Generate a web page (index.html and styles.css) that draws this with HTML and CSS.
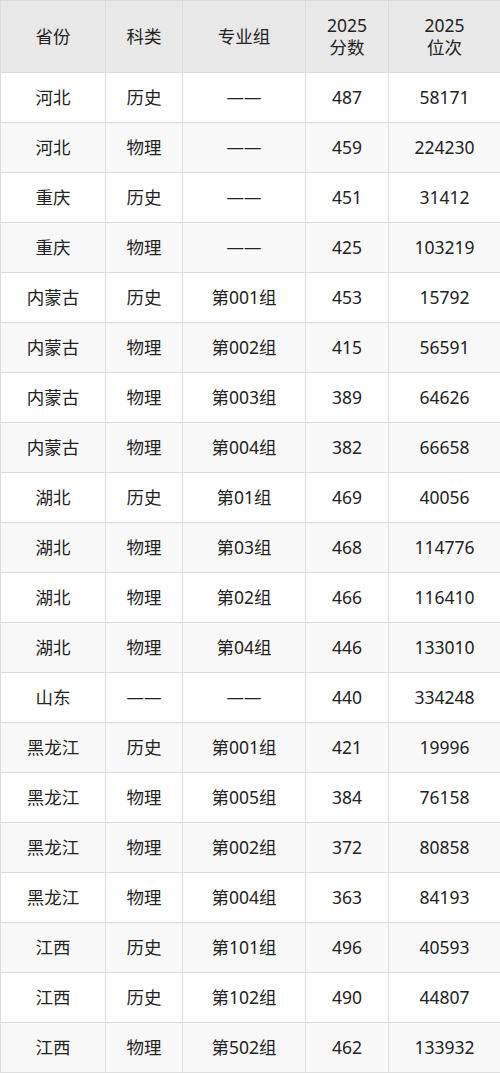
FILE: index.html
```html
<!DOCTYPE html>
<html lang="zh">
<head>
<meta charset="utf-8">
<link rel="stylesheet" href="styles.css">
</head>
<body>
<table class="score-table">
<colgroup>
<col class="c1"><col class="c2"><col class="c3"><col class="c4"><col class="c5">
</colgroup>
<thead>
<tr><th>省份</th><th>科类</th><th>专业组</th><th>2025<br>分数</th><th>2025<br>位次</th></tr>
</thead>
<tbody>
<tr><td>河北</td><td>历史</td><td>——</td><td>487</td><td>58171</td></tr>
<tr><td>河北</td><td>物理</td><td>——</td><td>459</td><td>224230</td></tr>
<tr><td>重庆</td><td>历史</td><td>——</td><td>451</td><td>31412</td></tr>
<tr><td>重庆</td><td>物理</td><td>——</td><td>425</td><td>103219</td></tr>
<tr><td>内蒙古</td><td>历史</td><td>第001组</td><td>453</td><td>15792</td></tr>
<tr><td>内蒙古</td><td>物理</td><td>第002组</td><td>415</td><td>56591</td></tr>
<tr><td>内蒙古</td><td>物理</td><td>第003组</td><td>389</td><td>64626</td></tr>
<tr><td>内蒙古</td><td>物理</td><td>第004组</td><td>382</td><td>66658</td></tr>
<tr><td>湖北</td><td>历史</td><td>第01组</td><td>469</td><td>40056</td></tr>
<tr><td>湖北</td><td>物理</td><td>第03组</td><td>468</td><td>114776</td></tr>
<tr><td>湖北</td><td>物理</td><td>第02组</td><td>466</td><td>116410</td></tr>
<tr><td>湖北</td><td>物理</td><td>第04组</td><td>446</td><td>133010</td></tr>
<tr><td>山东</td><td>——</td><td>——</td><td>440</td><td>334248</td></tr>
<tr><td>黑龙江</td><td>历史</td><td>第001组</td><td>421</td><td>19996</td></tr>
<tr><td>黑龙江</td><td>物理</td><td>第005组</td><td>384</td><td>76158</td></tr>
<tr><td>黑龙江</td><td>物理</td><td>第002组</td><td>372</td><td>80858</td></tr>
<tr><td>黑龙江</td><td>物理</td><td>第004组</td><td>363</td><td>84193</td></tr>
<tr><td>江西</td><td>历史</td><td>第101组</td><td>496</td><td>40593</td></tr>
<tr><td>江西</td><td>历史</td><td>第102组</td><td>490</td><td>44807</td></tr>
<tr><td>江西</td><td>物理</td><td>第502组</td><td>462</td><td>133932</td></tr>
</tbody>
</table>
</body>
</html>
```
FILE: styles.css
```css
html, body {
  margin: 0;
  padding: 0;
  background: #ffffff;
}
.score-table {
  width: 500px;
  border-collapse: collapse;
  table-layout: fixed;
  font-family: "Noto Sans", "Open Sans", "Noto Sans CJK SC", sans-serif;
  font-size: 17.5px;
  color: #222222;
}
.c1 { width: 105px; }
.c2 { width: 77px; }
.c3 { width: 123px; }
.c4 { width: 83px; }
.c5 { width: 112px; }
.score-table th,
.score-table td {
  border: 1px solid #dcdcdc;
  text-align: center;
  vertical-align: middle;
  padding: 0 0 2px 0;
  font-weight: normal;
}
.score-table th {
  background: #e8e8e8;
  height: 69px;
  line-height: 22px;
}
.score-table td {
  height: 47px;
}
.score-table tbody tr:nth-child(even) td {
  background: #f8f8f8;
}
```
